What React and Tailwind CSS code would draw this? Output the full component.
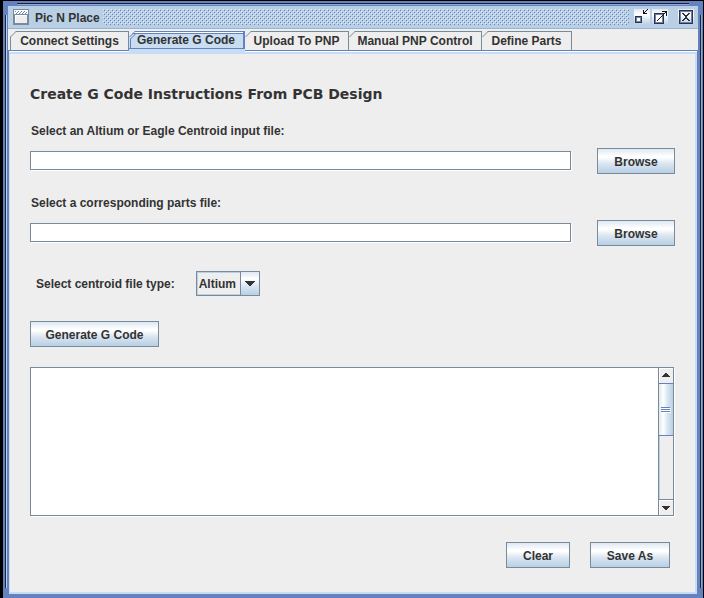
import React from "react";

const tabs = [
  { name: "Connect Settings", width: "w-[119px]" },
  { name: "Generate G Code", width: "w-[116px]", selected: true },
  { name: "Upload To PNP", width: "w-[104px]" },
  { name: "Manual PNP Control", width: "w-[133px]" },
  { name: "Define Parts", width: "w-[90px]" },
];

function MetalButton({ children, className }) {
  return (
    <button
      type="button"
      className={`h-[26px] shrink-0 border border-[#7a8a99] bg-[linear-gradient(to_bottom,#dde8f3_0%,#ffffff_30%,#ffffff_35%,#dbe6f1_60%,#b8cfe5_100%)] pt-0.5 text-center leading-4 font-bold ${className}`}
    >
      {children}
    </button>
  );
}

function WindowIcon() {
  return (
    <svg width="16" height="16" className="shrink-0" shapeRendering="crispEdges" aria-hidden="true">
      <rect width="16" height="16" fill="#7a8a99" />
      <rect x="1" y="1" width="14" height="14" fill="#fff" />
      <path d="M2 2h1v1H2zM5 2h1v1H5zM8 2h1v1H8zM11 2h1v1h-1zM3 4h1v1H3zM6 4h1v1H6zM9 4h1v1H9zM12 4h1v1h-1zM4 3h1v1H4zM7 3h1v1H7zM10 3h1v1h-1zM13 3h1v1h-1z" fill="#6382bf" />
      <path d="M1 5h14v10H1z" fill="#7a8a99" />
      <rect x="2" y="6" width="12" height="8" fill="#fff" />
      <rect x="3" y="7" width="11" height="7" fill="#eee" />
    </svg>
  );
}

function Bumps() {
  return (
    <svg className="block h-4 w-full" shapeRendering="crispEdges" aria-hidden="true">
      <defs>
        <pattern id="bumps" width="4" height="4" patternUnits="userSpaceOnUse">
          <path d="M0 0h1v1H0zM2 2h1v1H2z" fill="#e4eef8" />
          <path d="M1 1h1v1H1zM3 3h1v1H3z" fill="#6382bf" />
        </pattern>
      </defs>
      <rect width="100%" height="100%" fill="url(#bumps)" />
    </svg>
  );
}

function IconFrame({ label, children }) {
  return (
    <button
      type="button"
      aria-label={label}
      className="size-4 shrink-0 bg-[linear-gradient(to_bottom,#dde8f3_0%,#ffffff_35%,#dbe6f1_65%,#b8cfe5_100%)]"
    >
      <svg width="16" height="16" className="block" shapeRendering="crispEdges">
        {children}
      </svg>
    </button>
  );
}

function TitleBar() {
  return (
    <header className="flex h-[23px] items-center border-b border-[#99b3cc] bg-[#b8cfe5] pr-1 pl-[5px]">
      <WindowIcon />
      <h1 className="ml-1.5 shrink-0 pt-0.5 font-bold">Pic N Place</h1>
      <div className="mr-[5px] ml-[3px] min-w-0 flex-1">
        <Bumps />
      </div>
      <IconFrame label="Minimize">
        <path d="M1.5 7.5h6v6h-6z" fill="none" stroke="#333" />
        <path d="M2.5 8.5h4v4h-4z" fill="#fff" stroke="#6382bf" />
        <path d="M9 1h1v3h3v1H9zM10 3h1v1h-1zM11 2h1v1h-1zM12 1h1v1h-1zM13 0h1v1h-1z" fill="#111" />
      </IconFrame>
      <div className="w-0.5 shrink-0" />
      <IconFrame label="Maximize">
        <path d="M2.5 4.5h9v10h-9z" fill="none" stroke="#333" />
        <path d="M3.5 5.5h7v8h-7z" fill="#fff" stroke="#6382bf" />
        <path d="M5 11h1v1H5zM6 10h1v1H6zM7 9h1v1H7zM8 8h1v1H8zM9 7h1v1H9zM10 6h1v1h-1zM11 5h1v1h-1zM12 4h1v1h-1zM13 3h1v1h-1zM10 2h5v5h-1V3h-4z" fill="#111" />
      </IconFrame>
      <div className="w-2.5 shrink-0" />
      <IconFrame label="Close">
        <path d="M1.5 1.5h13v13h-13z" fill="none" stroke="#333" />
        <path d="M2.5 2.5h11v11h-11z" fill="none" stroke="#6382bf" />
        <path d="M4 4h2v1H4zM10 4h2v1h-2zM5 5h2v1H5zM9 5h2v1H9zM6 6h4v1H6zM7 7h2v2H7zM6 9h4v1H6zM5 10h2v1H5zM9 10h2v1H9zM4 11h2v1H4zM10 11h2v1h-2z" fill="#333" />
      </IconFrame>
    </header>
  );
}

function Tab({ tab, first }) {
  if (tab.selected) {
    return (
      <button
        type="button"
        role="tab"
        aria-selected="true"
        className={`relative -mb-1 h-[23px] shrink-0 border-t border-[#6382bf] bg-[#c8ddf2] pb-[5px] text-center font-bold ${tab.width}`}
      >
        <span className="flex h-[17px] items-center justify-center border-r-2 border-b border-[#6382bf] shadow-[inset_0_1px_#ffffff,inset_0_2px_#6382bf]">
          {tab.name}
        </span>
        <svg width="7" height="18" className="absolute -top-px left-0" aria-hidden="true">
          <path d="M0 0h6L0 6z" fill="#eee" />
          <path d="M0.5 6L6 0.5M1.5 18V8L7 2.5" fill="none" stroke="#6382bf" />
        </svg>
      </button>
    );
  }
  return (
    <button
      type="button"
      role="tab"
      aria-selected="false"
      className={`relative h-[19px] shrink-0 border-t border-r border-[#7a8a99] bg-[#eeeeee] text-center leading-[19px] font-bold ${tab.width} ${first ? "border-l" : ""}`}
    >
      {tab.name}
      <svg width="7" height="7" className={`absolute -top-px ${first ? "-left-px" : "left-0"}`} aria-hidden="true">
        <path d="M0 0h6L0 6z" fill="#eee" />
        <path d="M0.5 6L6 0.5" fill="none" stroke="#7a8a99" />
      </svg>
    </button>
  );
}

function FileRow({ id, label }) {
  return (
    <div>
      <label htmlFor={id} className="ml-px block">
        {label}
      </label>
      <div className="mt-[9px] flex items-center gap-[26px]">
        <input
          id={id}
          type="text"
          className="mb-px h-[19px] min-w-0 flex-1 border border-[#7a8a99] bg-white px-1 shadow-[1px_1px_#ffffff] outline-none"
        />
        <MetalButton className="w-[78px]">Browse</MetalButton>
      </div>
    </div>
  );
}

function ScrollBar() {
  return (
    <div className="flex w-[15px] flex-col border-l border-[#7a8a99] bg-[#eeeeee]">
      <button type="button" aria-label="Scroll up" className="flex h-[15px] items-center justify-center border-t border-l border-white pr-px pb-0.5">
        <svg width="8" height="4" shapeRendering="crispEdges" aria-hidden="true">
          <path d="M3 0h2v1h1v1h1v1h1v1H0V3h1V2h1V1h1z" fill="#333" />
        </svg>
      </button>
      <div className="flex h-[53px] items-center justify-center border-y border-[#6382bf] bg-[linear-gradient(to_right,#dde8f3_0%,#ffffff_30%,#dbe6f1_60%,#b8cfe5_100%)]">
        <svg width="10" height="6" shapeRendering="crispEdges" aria-hidden="true">
          <path d="M0 0h9v1H0zM0 2h9v1H0zM0 4h9v1H0z" fill="#6382bf" />
          <path d="M1 1h9v1H1zM1 3h9v1H1zM1 5h9v1H1z" fill="#fff" />
        </svg>
      </div>
      <div className="flex-1 border-l border-[#b8cfe5]" />
      <button type="button" aria-label="Scroll down" className="flex h-4 items-center justify-center border-t border-[#7a8a99] shadow-[inset_1px_1px_#ffffff]">
        <svg width="8" height="4" shapeRendering="crispEdges" aria-hidden="true">
          <path d="M0 0h8v1H7v1H6v1H5v1H3V3H2V2H1V1H0z" fill="#333" />
        </svg>
      </button>
    </div>
  );
}

export default function App() {
  return (
    <div className="flex min-h-screen flex-col bg-black pt-px pr-px pl-[3px] font-['Liberation_Sans',Arial,sans-serif] text-[12px] leading-4 font-bold text-[#333333]">
      <div className="relative flex flex-1 flex-col bg-[#6382bf] px-[5px] pt-[5px] pb-[3px]">
        <div className="absolute top-0.5 right-3.5 left-3.5 h-0.5 border-t border-[#222233] bg-[#b8cfe5]/50" />
        <div className="absolute top-3.5 bottom-2.5 left-0.5 w-0.5 border-l border-[#222233] bg-[#b8cfe5]" />
        <div className="absolute top-3.5 right-px bottom-2.5 w-0.5 border-l border-[#222233] bg-[#b8cfe5]/50" />

        <main className="flex flex-1 flex-col bg-[#eeeeee]">
          <TitleBar />
          <div role="tablist" className="mt-0.5 flex pl-0.5">
            {tabs.map((tab, i) => (
              <Tab key={tab.name} tab={tab} first={i === 0} />
            ))}
          </div>

          <section className="flex flex-1 flex-col border border-[#6382bf]">
            <div className="flex-1 border-t border-white">
              <div className="h-full border-t-2 border-r-2 border-b-2 border-l border-[#c8ddf2] pt-[30px] pr-5 pb-6 pl-5">
                <h2 className="font-['DejaVu_Sans',Verdana,sans-serif] text-[14px] leading-5">
                  Create G Code Instructions From PCB Design
                </h2>
                <form onSubmit={(event) => event.preventDefault()}>
                  <div className="mt-[19px] flex flex-col gap-[21px]">
                    <FileRow id="centroid" label="Select an Altium or Eagle Centroid input file:" />
                    <FileRow id="parts" label="Select a corresponding parts file:" />
                  </div>

                  <div className="mt-[25px] ml-1.5 flex items-center">
                    <label htmlFor="type">Select centroid file type:</label>
                    <div className="relative ml-[21px] h-[25px] w-16">
                      <select
                        id="type"
                        className="block size-full appearance-none border border-[#7a8a99] bg-[#eeeeee] pl-0.5 font-bold shadow-[inset_0_0_0_1px_#b8cfe5] outline-none"
                      >
                        <option>Altium</option>
                        <option>Eagle</option>
                      </select>
                      <span className="pointer-events-none absolute top-0 right-0 flex h-full w-5 items-center justify-center border border-[#7a8a99] bg-[linear-gradient(to_bottom,#dde8f3_0%,#ffffff_30%,#dbe6f1_60%,#b8cfe5_100%)]">
                        <svg width="10" height="5" shapeRendering="crispEdges" aria-hidden="true">
                          <path d="M0 0h10v1H9v1H8v1H7v1H6v1H4V4H3V3H2V2H1V1H0z" fill="#333" />
                        </svg>
                      </span>
                    </div>
                  </div>

                  <MetalButton className="mt-[25px] block w-[129px]">Generate G Code</MetalButton>

                  <div className="mt-5 mr-px flex h-[149px] border border-[#7a8a99] bg-white shadow-[1px_1px_#ffffff]">
                    <textarea aria-label="Generated G code" className="min-w-0 flex-1 resize-none p-1 outline-none" />
                    <ScrollBar />
                  </div>

                  <div className="mt-[26px] mr-[5px] flex justify-end gap-5">
                    <MetalButton className="w-16">Clear</MetalButton>
                    <MetalButton className="w-20">Save As</MetalButton>
                  </div>
                </form>
              </div>
            </div>
          </section>
        </main>
      </div>
    </div>
  );
}
